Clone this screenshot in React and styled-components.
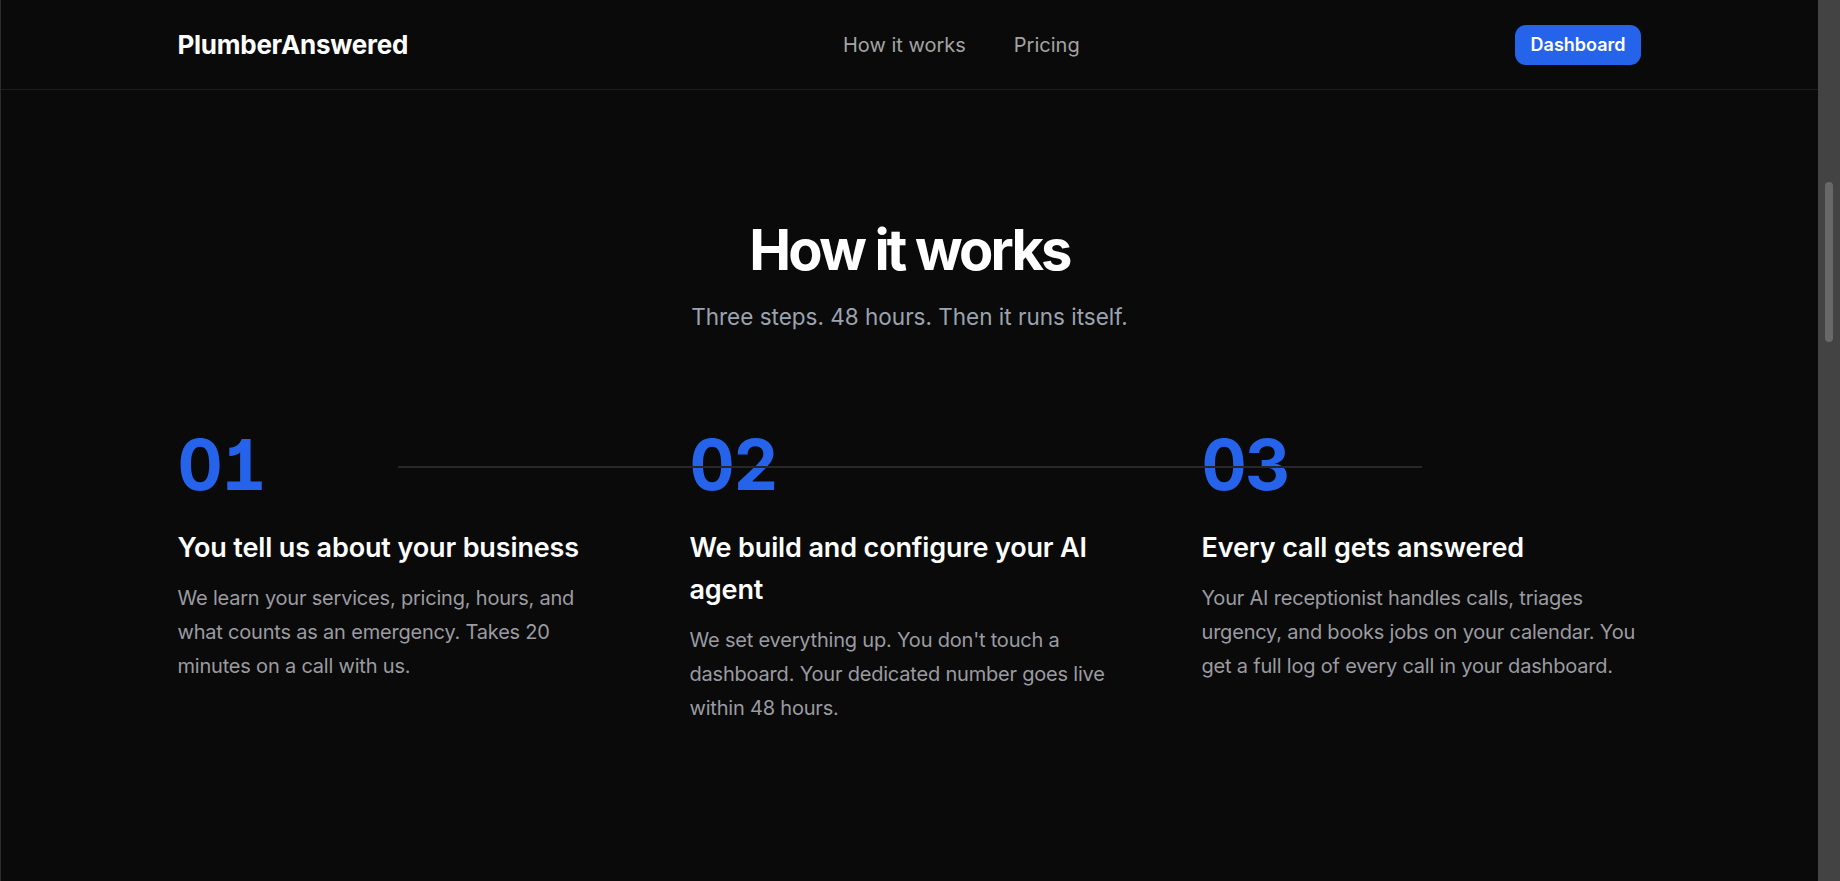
import styled, { createGlobalStyle } from "styled-components";

const steps = [
  {
    number: "01",
    title: "You tell us about your business",
    text: "We learn your services, pricing, hours, and what counts as an emergency. Takes 20 minutes on a call with us.",
  },
  {
    number: "02",
    title: "We build and configure your AI agent",
    text: "We set everything up. You don't touch a dashboard. Your dedicated number goes live within 48 hours.",
  },
  {
    number: "03",
    title: "Every call gets answered",
    text: "Your AI receptionist handles calls, triages urgency, and books jobs on your calendar. You get a full log of every call in your dashboard.",
  },
];

export default function App() {
  return (
    <>
      <GlobalStyle />
      <Page>
        <Header>
          <HeaderInner>
            <Logo>PlumberAnswered</Logo>
            <Nav>
              <NavLink href="#how-it-works">How it works</NavLink>
              <NavLink href="#pricing">Pricing</NavLink>
            </Nav>
            <DashboardButton>Dashboard</DashboardButton>
          </HeaderInner>
        </Header>

        <HowSection id="how-it-works">
          <Container>
            <SectionTitle>How it works</SectionTitle>
            <SectionLead>Three steps. 48 hours. Then it runs itself.</SectionLead>
            <Steps>
              <Connector />
              {steps.map((step) => (
                <Step key={step.number}>
                  <StepNumber>{step.number}</StepNumber>
                  <StepTitle>{step.title}</StepTitle>
                  <StepText>{step.text}</StepText>
                </Step>
              ))}
            </Steps>
          </Container>
        </HowSection>
      </Page>
    </>
  );
}

const GlobalStyle = createGlobalStyle`
    body {
        margin: 0;
        background: #0a0a0a;
        color: #fff;
        font-family: Inter, "Noto Sans", sans-serif;
        -webkit-font-smoothing: antialiased;
        overflow: hidden;
    }

    * {
        box-sizing: border-box;
    }
`;

// right border stands in for the page scroll rail, ::after for its thumb
const Page = styled.div`
    min-height: 100vh;
    border-left: 1px solid #2c2c2c;
    border-right: 22px solid #434343;
    background: #0a0a0a;

    &::after {
        content: "";
        position: fixed;
        top: 182px;
        right: 7px;
        width: 8px;
        height: 160px;
        border-radius: 4px;
        background: #686868;
    }
`;

const Header = styled.header`
    height: 90px;
    background: #0a0a0a;
    border-bottom: 1px solid #1e1e1e;
`;

const HeaderInner = styled.div`
    max-width: 1464px;
    height: 100%;
    margin: 0 auto;
    display: flex;
    align-items: center;
    justify-content: space-between;
`;

const Logo = styled.div`
    font-size: 26px;
    font-weight: 700;
    letter-spacing: -0.01em;
    color: #fff;
`;

const Nav = styled.nav`
    display: flex;
    gap: 48px;
`;

const NavLink = styled.a`
    font-size: 20px;
    color: #a3a3a3;
    text-decoration: none;
`;

const DashboardButton = styled.button`
    height: 40px;
    padding: 0 16px;
    border: none;
    border-radius: 11px;
    background: #2563eb;
    color: #fff;
    font-family: inherit;
    font-size: 18px;
    font-weight: 600;
    cursor: pointer;
`;

const HowSection = styled.section`
    padding: 128px 0 180px;
`;

const Container = styled.div`
    max-width: 1464px;
    margin: 0 auto;
    display: flex;
    flex-direction: column;
    align-items: center;
`;

const SectionTitle = styled.h2`
    margin: 0;
    font-size: 56px;
    line-height: 1.15;
    font-weight: 700;
    letter-spacing: -0.05em;
    color: #fff;
`;

const SectionLead = styled.p`
    margin: 18px 0 0;
    font-size: 22.5px;
    line-height: 1.5;
    color: #9ca3af;
`;

const Steps = styled.div`
    position: relative;
    width: 100%;
    margin-top: 96px;
    display: grid;
    grid-template-columns: repeat(3, 1fr);
    column-gap: 72px;
`;

const Connector = styled.div`
    position: absolute;
    top: 36px;
    left: 220px;
    right: 220px;
    height: 2px;
    background: #272727;
    z-index: 1;
`;

const Step = styled.div`
    display: flex;
    flex-direction: column;
`;

const StepNumber = styled.div`
    font-size: 70px;
    line-height: 1;
    font-weight: 700;
    color: #2563eb;
    font-feature-settings: "cv01", "tnum";
    letter-spacing: -0.02em;
`;

const StepTitle = styled.h3`
    margin: 27px 0 0;
    font-size: 27px;
    line-height: 42px;
    font-weight: 600;
    letter-spacing: -0.005em;
    color: #fff;
`;

const StepText = styled.p`
    margin: 12px 0 0;
    font-size: 20px;
    line-height: 34px;
    letter-spacing: -0.01em;
    color: #9b9ba1;
`;
